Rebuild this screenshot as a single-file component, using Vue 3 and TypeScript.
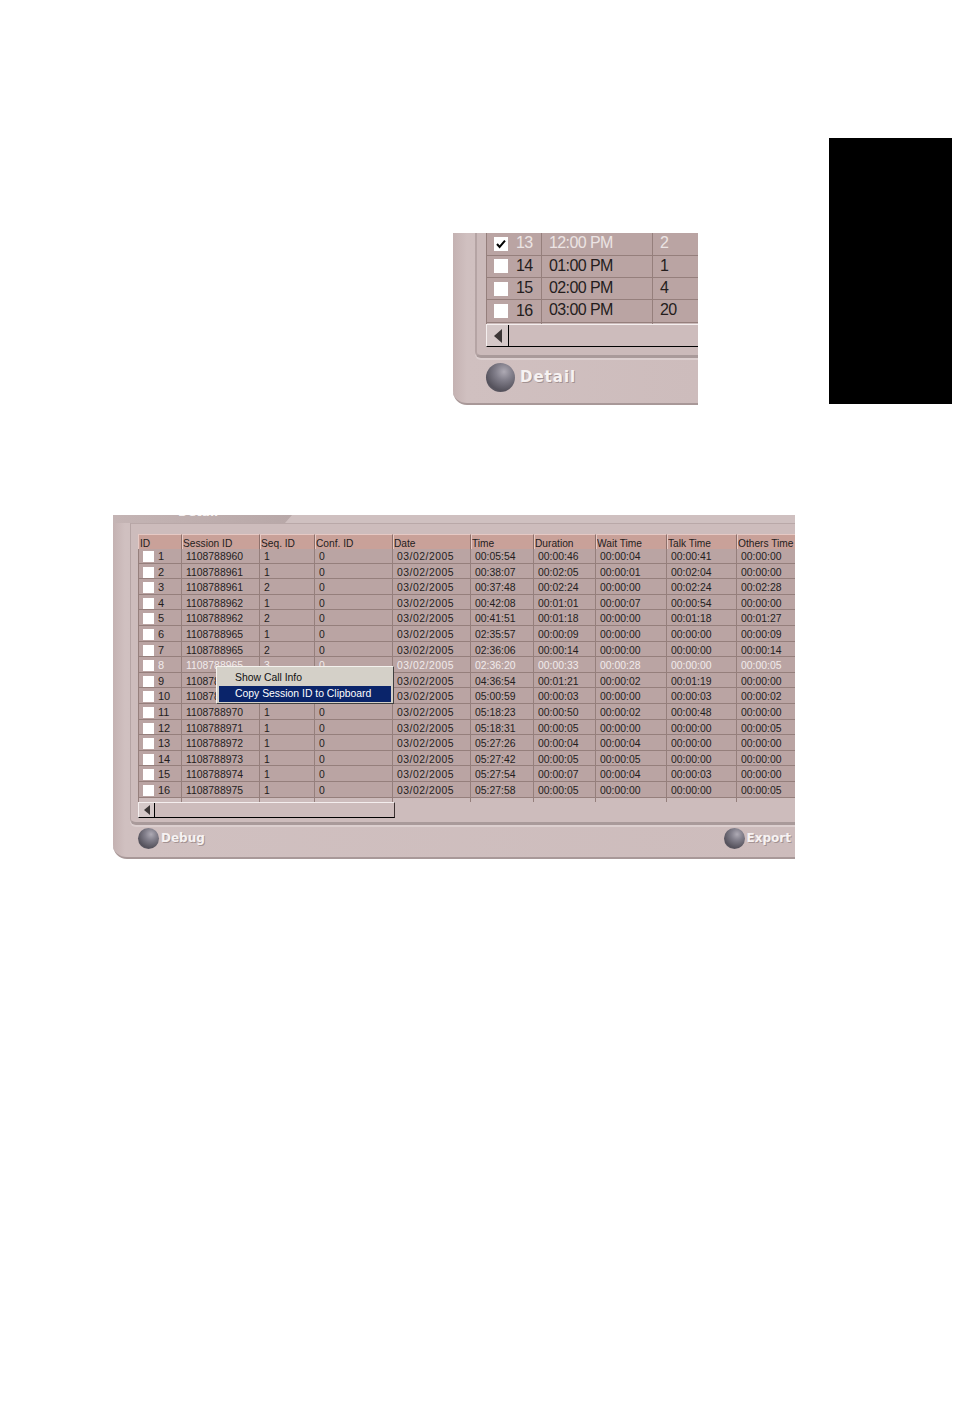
<script setup lang="ts">
interface TopRow { id: number; time: string; count: number; checked: boolean; active: boolean }

const topRows: TopRow[] = [
  { id: 13, time: '12:00 PM', count: 2, checked: true, active: true },
  { id: 14, time: '01:00 PM', count: 1, checked: false, active: false },
  { id: 15, time: '02:00 PM', count: 4, checked: false, active: false },
  { id: 16, time: '03:00 PM', count: 20, checked: false, active: false },
]

const headers: string[] = ['ID', 'Session ID', 'Seq. ID', 'Conf. ID', 'Date', 'Time', 'Duration', 'Wait Time', 'Talk Time', 'Others Time']

const raw: string[] = [
  '1108788960 1 0 00:05:54 00:00:46 00:00:04 00:00:41 00:00:00',
  '1108788961 1 0 00:38:07 00:02:05 00:00:01 00:02:04 00:00:00',
  '1108788961 2 0 00:37:48 00:02:24 00:00:00 00:02:24 00:02:28',
  '1108788962 1 0 00:42:08 00:01:01 00:00:07 00:00:54 00:00:00',
  '1108788962 2 0 00:41:51 00:01:18 00:00:00 00:01:18 00:01:27',
  '1108788965 1 0 02:35:57 00:00:09 00:00:00 00:00:00 00:00:09',
  '1108788965 2 0 02:36:06 00:00:14 00:00:00 00:00:00 00:00:14',
  '1108788965 3 0 02:36:20 00:00:33 00:00:28 00:00:00 00:00:05',
  '1108788968 1 0 04:36:54 00:01:21 00:00:02 00:01:19 00:00:00',
  '1108788969 1 0 05:00:59 00:00:03 00:00:00 00:00:03 00:00:02',
  '1108788970 1 0 05:18:23 00:00:50 00:00:02 00:00:48 00:00:00',
  '1108788971 1 0 05:18:31 00:00:05 00:00:00 00:00:00 00:00:05',
  '1108788972 1 0 05:27:26 00:00:04 00:00:04 00:00:00 00:00:00',
  '1108788973 1 0 05:27:42 00:00:05 00:00:05 00:00:00 00:00:00',
  '1108788974 1 0 05:27:54 00:00:07 00:00:04 00:00:03 00:00:00',
  '1108788975 1 0 05:27:58 00:00:05 00:00:00 00:00:00 00:00:05',
]

const rows = raw.map((line, i) => {
  const [session, seq, conf, time, duration, wait, talk, others] = line.split(' ')
  return {
    id: i + 1,
    cells: [session, seq, conf, '03/02/2005', time, duration, wait, talk, others],
    active: i === 7,
  }
})

const stub: number[] = [1, 2, 3, 4, 5, 6, 7, 8, 9, 10]
</script>

<template>
  <div class="page">
    <div class="top">
      <section class="shot-small">
        <div class="frame-small">
          <div class="small-table">
            <div v-for="r in topRows" :key="r.id" class="small-row" :class="{ active: r.active }">
              <div class="small-id">
                <span class="box-lg">
                  <svg v-if="r.checked" viewBox="0 0 14 14" width="14" height="14">
                    <path d="M3 7l2.6 3L11 3.6" fill="none" stroke="#000" stroke-width="2" />
                  </svg>
                </span>
                <span class="small-num">{{ r.id }}</span>
              </div>
              <div class="small-time">{{ r.time }}</div>
              <div class="small-count">{{ r.count }}</div>
            </div>
            <div class="small-row small-stub"><div class="small-id"></div><div class="small-time"></div><div></div></div>
            <div class="scroll-lg">
              <span class="scroll-btn-lg"><i class="arrow-lg"></i></span>
            </div>
          </div>
        </div>
        <div class="footer-small">
          <span class="ball ball-lg"></span>
          <span class="label-lg">Detail</span>
        </div>
      </section>
      <div class="black-tab"></div>
    </div>

    <section class="shot-large">
      <div class="tabstrip">
        <div class="tab"><span class="tab-text">Detail</span></div>
      </div>
      <div class="frame-large">
        <div class="grid-table">
          <div class="g-row g-head">
            <div v-for="h in headers" :key="h" class="g-hcell">{{ h }}</div>
          </div>
          <div v-for="r in rows" :key="r.id" class="g-row g-body" :class="{ active: r.active }">
            <div class="g-cell g-id"><span class="box-sm"></span><span class="g-num">{{ r.id }}</span></div>
            <div v-for="(c, i) in r.cells" :key="i" class="g-cell" :class="{ 'g-date': i === 3 }">{{ c }}</div>
          </div>
          <div class="g-row g-stub">
            <div v-for="n in stub" :key="n" class="g-stubcell"></div>
          </div>
          <div class="scroll-sm">
            <span class="scroll-btn-sm"><i class="arrow-sm"></i></span>
          </div>
        </div>
      </div>
      <div class="footer-large">
        <div class="action"><span class="ball ball-sm"></span><span class="label-sm">Debug</span></div>
        <div class="action"><span class="ball ball-sm"></span><span class="label-sm">Export</span></div>
      </div>
      <div class="menu">
        <div class="menu-item">Show Call Info</div>
        <div class="menu-item selected">Copy Session ID to Clipboard</div>
      </div>
    </section>
  </div>
</template>

<style>
html, body { margin: 0; background: #fff; }
</style>

<style scoped>
.page {
  width: 954px;
  height: 1411px;
  background: #fff;
  overflow: hidden;
  font-family: "Liberation Sans", Arial, sans-serif;
  color: #241d1d;
}
.top { display: flex; align-items: flex-start; padding-top: 138px; }
.black-tab { width: 123px; height: 266px; margin-left: 131px; background: #000; }

/* small capture */
.shot-small {
  width: 245px;
  height: 172px;
  margin: 95px 0 0 453px;
  background: linear-gradient(90deg, #c4b2b2 0, #d0c0c0 14px, #cdbcbc 100%);
  border-bottom-left-radius: 14px;
  border-bottom: 2px solid #a89898;
  box-sizing: border-box;
  overflow: hidden;
}
.frame-small {
  height: 125px;
  margin-left: 22px;
  padding-left: 11px;
  box-sizing: border-box;
  background: #cbbaba;
  border-left: 2px solid #b5a4a4;
  border-bottom: 3px solid #a99a9a;
  border-bottom-left-radius: 6px;
  box-shadow: 0 2px 0 #dccfcf;
  overflow: hidden;
}
.small-table { margin-left: -2px; width: 240px; }
.small-row {
  display: grid;
  grid-template-columns: 56px 111px 1fr;
  height: 22.4px;
  box-sizing: border-box;
  background: #baa4a3;
  border-bottom: 1px solid #957f7c;
  font-size: 16px;
  letter-spacing: -0.6px;
  line-height: 20px;
}
.small-row.active { color: #ece4e4; }
.small-row > div { box-sizing: border-box; border-right: 1px solid #957f7c; }
.small-id { display: flex; align-items: center; gap: 8px; padding-left: 7px; border-left: 1px solid #957f7c; }
.small-num { margin-top: -1px; }
.small-time { padding-left: 7px; }
.small-count { padding-left: 7px; }
.small-row:first-child { height: 22.6px; }
.small-stub { height: 1.4px; background: #cbbaba; border-bottom: 0; }
.box-lg { width: 14px; height: 14px; background: #fff; display: block; flex: none; }
.box-lg svg { display: block; }
.scroll-lg {
  height: 23px;
  box-sizing: border-box;
  display: flex;
  background: #cdbcbc;
  border-top: 1px solid #f4eeee;
  border-left: 1px solid #f4eeee;
  border-bottom: 1px solid #000;
}
.scroll-btn-lg {
  width: 21px;
  display: flex;
  align-items: center;
  justify-content: center;
  background: #d5c8c8;
  border-right: 1px solid #000;
}
.arrow-lg { border: 7px solid transparent; border-right: 8px solid #3c3636; border-left: 0; }
.footer-small { display: flex; align-items: center; height: 38px; padding-left: 33px; gap: 5px; }
.label-lg {
  font-family: "DejaVu Sans", sans-serif;
  font-weight: 700;
  font-size: 15px;
  letter-spacing: 1px;
  color: #f6f2f2;
  text-shadow: 1px 1px 0 #a39292;
}
.ball {
  display: block;
  border-radius: 50%;
  background: radial-gradient(circle at 62% 30%, #aeaab4 0, #83808c 30%, #55525c 70%, #6d6a74 100%);
  flex: none;
}
.ball-lg { width: 29px; height: 29px; }
.ball-sm { width: 21px; height: 21px; }

/* large capture */
.shot-large {
  position: relative;
  width: 682px;
  height: 344px;
  margin: 110px 0 0 113px;
  background: linear-gradient(90deg, #c4b2b2 0, #d0c0c0 12px, #cdbcbc 100%);
  border-bottom-left-radius: 14px;
  border-bottom: 2px solid #a89898;
  box-sizing: border-box;
  overflow: hidden;
}
.tabstrip { height: 8px; overflow: hidden; background: #cfc0c0; }
.tab {
  width: 179px;
  height: 8px;
  background: linear-gradient(90deg, #c4b4b4, #b8a8a8);
  clip-path: polygon(0 0, 100% 0, 172px 100%, 0 100%);
  overflow: hidden;
}
.tab-text {
  display: block;
  margin: -10px 0 0 65px;
  font: 700 12px/14px "DejaVu Sans", sans-serif;
  color: #f4efef;
}
.frame-large {
  height: 302px;
  margin-left: 17px;
  padding: 10px 0 0 7px;
  box-sizing: border-box;
  background: #cdbcbc;
  border-left: 1px solid #b5a4a4;
  border-top: 1px solid #b9a8a8;
  border-bottom: 3px solid #a99a9a;
  border-bottom-left-radius: 6px;
  box-shadow: 0 2px 0 #dccfcf;
}
.grid-table { width: 657px; overflow: hidden; }
.g-row {
  display: grid;
  grid-template-columns: 44px 78px 55px 78px 78px 63px 62px 71px 70px 59px;
}
.g-head { height: 15px; margin-bottom: -1px; position: relative; }
.g-hcell {
  box-sizing: border-box;
  height: 15px;
  background: #c9a199;
  border-top: 1px solid #e6c9c4;
  border-left: 1px solid #e6c9c4;
  border-right: 1px solid #8d706b;
  font-size: 10.2px;
  line-height: 17px;
  white-space: nowrap;
  overflow: hidden;
}
.g-hcell:first-child { padding-left: 1px; }
.g-body { height: 15.6px; box-sizing: border-box; background: #baa4a3; border-bottom: 1px solid #957f7c; }
.g-body.active { color: #f1ebeb; }
.g-cell {
  box-sizing: border-box;
  padding-left: 4px;
  font-size: 10.4px;
  line-height: 17px;
  border-right: 1px solid #957f7c;
  white-space: nowrap;
  overflow: hidden;
}
.g-date { letter-spacing: 0.5px; }
.g-id { display: flex; align-items: flex-start; gap: 4px; border-left: 1px solid #957f7c; padding-left: 4px; font-size: 11px; }
.g-num { line-height: 15px; margin-top: 1px; }
.box-sm { display: block; width: 11px; height: 11px; margin-top: 3px; background: #fff; flex: none; }
.g-stub { height: 4px; }
.g-stubcell { border-right: 1px solid #957f7c; box-sizing: border-box; }
.g-stubcell:first-child { border-left: 1px solid #957f7c; }
.scroll-sm {
  width: 257px;
  height: 16px;
  box-sizing: border-box;
  display: flex;
  background: #cdbcbc;
  border-top: 1px solid #f4eeee;
  border-left: 1px solid #f4eeee;
  border-right: 1px solid #3a3030;
  border-bottom: 1px solid #000;
}
.scroll-btn-sm {
  width: 15px;
  display: flex;
  align-items: center;
  justify-content: center;
  background: #d5c8c8;
  border-right: 1px solid #000;
}
.arrow-sm { border: 5px solid transparent; border-right: 6px solid #3c3636; border-left: 0; }
.footer-large {
  display: flex;
  justify-content: space-between;
  align-items: center;
  height: 26px;
  padding: 0 4px 0 25px;
}
.action { display: flex; align-items: center; gap: 2px; }
.label-sm {
  font-family: "DejaVu Sans", sans-serif;
  font-weight: 700;
  font-size: 12px;
  color: #f6f2f2;
  text-shadow: 1px 1px 0 #a39292;
}
.menu {
  position: absolute;
  left: 103px;
  top: 151px;
  width: 178px;
  height: 38px;
  box-sizing: border-box;
  padding: 3px 2px 1px;
  background: #d4d0c8;
  border-top: 1px solid #f4f2ee;
  border-left: 1px solid #f4f2ee;
  border-right: 1px solid #404040;
  border-bottom: 1px solid #404040;
  font-size: 10.4px;
  color: #111;
}
.menu-item { height: 16px; line-height: 16px; padding-left: 16px; white-space: nowrap; }
.menu-item.selected { background: #0a246a; color: #fff; }
</style>
